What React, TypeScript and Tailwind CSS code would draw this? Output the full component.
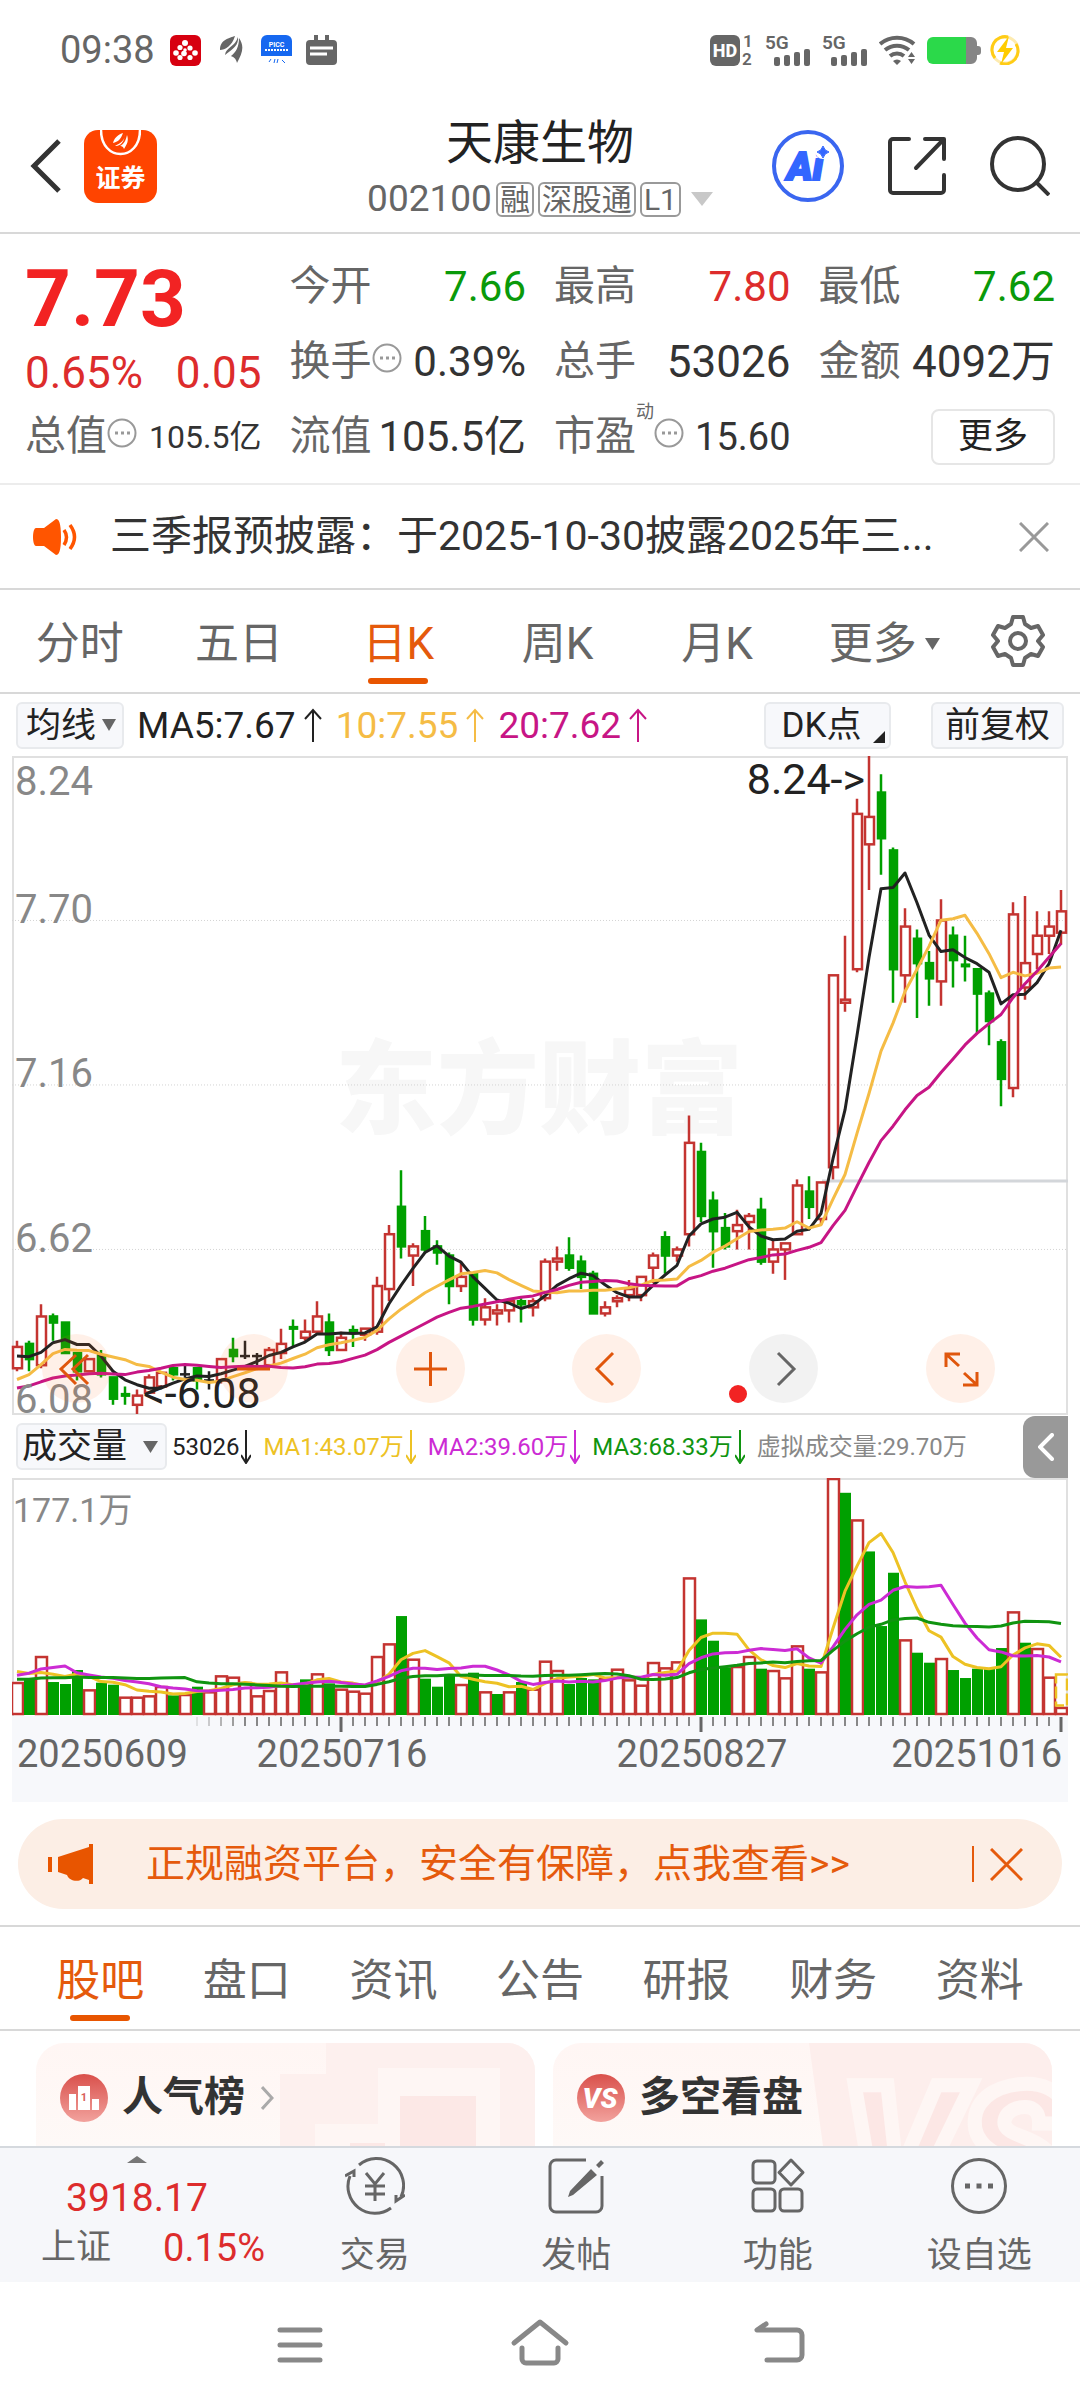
import React from 'react';

const RED = '#c43431';
const GREEN = '#00a000';
const STEP = 12;

// [open, close, high, low, volume]
const candles = [
  [6.23, 6.3, 6.32, 6.22, 24], [6.31, 6.26, 6.32, 6.22, 27], [6.24, 6.4, 6.44, 6.23, 43.5], [6.4, 6.38, 6.41, 6.32, 24],
  [6.38, 6.28, 6.38, 6.28, 22.5], [6.28, 6.22, 6.28, 6.19, 33], [6.22, 6.26, 6.26, 6.22, 18.5], [6.27, 6.21, 6.29, 6.2, 23.5],
  [6.2, 6.13, 6.2, 6.11, 22], [6.145, 6.14, 6.17, 6.11, 13], [6.11, 6.14, 6.16, 6.08, 13], [6.15, 6.2, 6.21, 6.15, 14],
  [6.17, 6.215, 6.22, 6.17, 21], [6.23, 6.21, 6.23, 6.19, 14], [6.21, 6.21, 6.24, 6.2, 15], [6.23, 6.19, 6.23, 6.16, 20.5],
  [6.19, 6.19, 6.22, 6.16, 17], [6.19, 6.26, 6.26, 6.18, 29], [6.29, 6.27, 6.33, 6.25, 28], [6.27, 6.27, 6.32, 6.26, 24],
  [6.27, 6.27, 6.28, 6.24, 14], [6.24, 6.29, 6.3, 6.23, 18], [6.28, 6.31, 6.36, 6.26, 32], [6.365, 6.36, 6.39, 6.3, 22],
  [6.33, 6.35, 6.39, 6.32, 26], [6.35, 6.4, 6.45, 6.34, 30.5], [6.38, 6.29, 6.41, 6.27, 23], [6.29, 6.33, 6.35, 6.29, 19],
  [6.355, 6.35, 6.37, 6.3, 17.5], [6.34, 6.36, 6.36, 6.32, 16], [6.35, 6.5, 6.53, 6.34, 43.5], [6.49, 6.67, 6.7, 6.45, 53],
  [6.76, 6.63, 6.88, 6.59, 73.5], [6.6, 6.63, 6.64, 6.5, 41.5], [6.68, 6.62, 6.73, 6.61, 26.5], [6.63, 6.61, 6.65, 6.57, 20.5],
  [6.6, 6.5, 6.61, 6.44, 30], [6.5, 6.53, 6.58, 6.48, 22.5], [6.54, 6.39, 6.54, 6.37, 31], [6.39, 6.43, 6.46, 6.37, 17],
  [6.41, 6.42, 6.44, 6.37, 15], [6.42, 6.45, 6.46, 6.38, 17], [6.45, 6.44, 6.46, 6.38, 24], [6.43, 6.45, 6.46, 6.4, 19],
  [6.46, 6.58, 6.59, 6.45, 40], [6.58, 6.59, 6.63, 6.55, 33], [6.6, 6.56, 6.66, 6.55, 22.5], [6.58, 6.53, 6.6, 6.49, 27],
  [6.54, 6.41, 6.55, 6.41, 26], [6.41, 6.43, 6.45, 6.4, 27], [6.45, 6.46, 6.47, 6.43, 34], [6.47, 6.49, 6.52, 6.45, 26],
  [6.47, 6.53, 6.53, 6.45, 22], [6.56, 6.6, 6.61, 6.51, 39], [6.66, 6.6, 6.68, 6.54, 35], [6.6, 6.62, 6.63, 6.58, 39.5],
  [6.67, 6.97, 7.06, 6.63, 102.5], [6.94, 6.73, 6.97, 6.71, 71], [6.78, 6.68, 6.81, 6.56, 55], [6.69, 6.63, 6.74, 6.62, 35],
  [6.68, 6.7, 6.75, 6.62, 36], [6.71, 6.73, 6.74, 6.62, 43.5], [6.75, 6.58, 6.79, 6.57, 34], [6.58, 6.62, 6.65, 6.54, 33],
  [6.62, 6.64, 6.64, 6.52, 27.5], [6.67, 6.83, 6.85, 6.67, 51.5], [6.81, 6.76, 6.86, 6.72, 34], [6.72, 6.84, 6.84, 6.7, 32],
  [6.89, 7.52, 7.52, 6.85, 177.1], [7.43, 7.44, 7.65, 7.4, 166], [7.54, 8.05, 8.1, 7.53, 146], [7.95, 8.04, 8.24, 7.8, 122],
  [8.12, 7.97, 8.18, 7.85, 66], [7.93, 7.54, 7.94, 7.43, 106], [7.52, 7.68, 7.74, 7.43, 56], [7.64, 7.56, 7.67, 7.38, 46],
  [7.56, 7.51, 7.6, 7.42, 38.5], [7.5, 7.7, 7.77, 7.42, 42], [7.65, 7.57, 7.68, 7.48, 33], [7.555, 7.55, 7.65, 7.5, 27],
  [7.54, 7.46, 7.54, 7.33, 34], [7.46, 7.37, 7.47, 7.29, 34], [7.3, 7.18, 7.31, 7.09, 49.5], [7.15, 7.72, 7.76, 7.12, 77],
  [7.48, 7.56, 7.78, 7.44, 53.5], [7.59, 7.65, 7.73, 7.54, 49.5], [7.65, 7.68, 7.73, 7.59, 28], [7.66, 7.73, 7.8, 7.62, 5.3],
];

// days before the first visible bar, needed for the averages
const priorCloses = [6.12, 6.13, 6.13, 6.14, 6.17, 6.17, 6.18, 6.18, 6.18, 5.97, 6.1, 6.07, 6.02, 6.14, 6.25, 6.27, 6.33, 6.22, 6.23];
const priorVolumes = [25, 24, 23, 22, 22, 24, 23, 22, 23, 22, 12, 12, 12, 12, 84, 34, 40, 30, 31];

const closes = candles.map((c) => c[1]);
const volumes = candles.map((c) => c[4]);

const average = (prior: number[], values: number[], n: number) => {
  const all = [...prior, ...values];
  return values.map((_, i) => {
    const end = prior.length + i + 1;
    return all.slice(end - n, end).reduce((a, b) => a + b, 0) / n;
  });
};

const barX = (i: number) => 5 + i * STEP;
const priceY = (p: number) => (8.24 - p) * 304.6;
const volumeY = (v: number) => 236 - (v / 177.1) * 236;
const line = (values: number[], y: (v: number) => number) =>
  values.map((v, i) => `${barX(i)},${y(v).toFixed(1)}`).join(' ');

const StatusBar = () => (
  <div className="flex items-center justify-between pl-[60px] pr-[60px] h-[100px] text-[#666]">
    <div className="flex items-center">
      <span className="text-[38px] leading-none">09:38</span>
      <svg className="ml-[15px] w-[31px] h-[31px]" viewBox="0 0 31 31">
        <rect width="31" height="31" rx="6" fill="#d70010" />
        <g fill="#fff">
          <circle cx="15" cy="8" r="3" /><circle cx="10" cy="12.500" r="2.600" /><circle cx="20" cy="13" r="2.600" />
          <circle cx="15" cy="15" r="1.800" /><circle cx="6" cy="18" r="2.800" /><circle cx="14" cy="18.500" r="2.800" />
          <circle cx="25" cy="18" r="2.800" /><circle cx="10" cy="22.500" r="2.600" /><circle cx="20" cy="22.500" r="2.600" />
        </g>
      </svg>
      <svg className="ml-[19px] w-[23px] h-[28px]" viewBox="0 0 23 28" fill="#666">
        <path d="M15 0C10 2 0 3 0 14c5 0 12-4 15-14z" />
        <path d="M18 1c1 8-5 12-13 18 1-8 10-8 13-18z" />
        <path d="M19 2c6 9 3 15-2 25-1-5-4-6-6-7 5-4 8-9 8-18z" />
      </svg>
      <svg className="ml-[18px] w-[31px] h-[31px]" viewBox="0 0 31 31">
        <path d="M0 21V6a6 6 0 016-6h19a6 6 0 016 6v15z" fill="#1668f0" />
        <text x="15.500" y="12" fontSize="7" fontWeight="700" fill="#fff" textAnchor="middle">PICC</text>
        <path d="M4 15h23" stroke="#fff" strokeWidth="2" strokeDasharray="2 1" />
        <path d="M8 27l2-3M14 24l-1 4M17 24l-1 4M21 25l3 3" stroke="#1668f0" strokeWidth="1" />
      </svg>
      <svg className="ml-[14px] w-[31px] h-[31px]" viewBox="0 0 31 31">
        <path d="M4 5h4V0h4v5h7V0h4v5h4a4 4 0 014 4v17a4 4 0 01-4 4H4a4 4 0 01-4-4V9a4 4 0 014-4z" fill="#666" />
        <path d="M4 13h23M4 19h17" stroke="#fff" strokeWidth="3" />
      </svg>
    </div>
    <div className="flex items-center">
      <svg className="w-[43px] h-[31px] overflow-visible" viewBox="0 0 43 31" fill="#666">
        <rect width="30" height="31" rx="6" />
        <text x="15" y="22" fontSize="18" fontWeight="800" fill="#fff" textAnchor="middle">HD</text>
        <text x="33" y="12" fontSize="17" fontWeight="600">1</text>
        <text x="32" y="30" fontSize="17" fontWeight="600">2</text>
      </svg>
      {[0, 1].map((n) => (
        <svg key={n} className="ml-3 w-[45px] h-[31px] overflow-visible" viewBox="0 0 45 31" fill="#666">
          <text x="0" y="14" fontSize="19" fontWeight="600">5G</text>
          <rect x="9" y="22" width="6" height="9" rx="2" />
          <rect x="19" y="20" width="6" height="11" rx="2" />
          <rect x="29" y="17" width="6" height="14" rx="2" />
          <rect x="39" y="14" width="6" height="17" rx="2" />
        </svg>
      ))}
      <svg className="ml-3 w-[37px] h-[30px]" viewBox="0 0 37 30" fill="none" stroke="#666" strokeWidth="4">
        <path d="M1 9a26 26 0 0134 0M6 15a19 19 0 0124 0M11 21a11 11 0 0114 0" />
        <path d="M14 26a6 6 0 018 0l-4 4zM29 22l3.500-5 3.500 5zM29 24h7l-3.500 5z" fill="#666" stroke="none" />
      </svg>
      <svg className="ml-[11px] w-[54px] h-[27px]" viewBox="0 0 54 27">
        <path d="M38 0h6a6 6 0 016 6v3h1a3 3 0 013 3v3a3 3 0 01-3 3h-1v3a6 6 0 01-6 6h-6z" fill="#858585" />
        <path d="M6 0h33v27H6a6 6 0 01-6-6V6a6 6 0 016-6z" fill="#2bd94a" />
      </svg>
      <svg className="ml-[9px] w-[30px] h-[30px]" viewBox="0 0 30 30">
        <circle cx="15" cy="15" r="13" fill="none" stroke="#fdebb0" strokeWidth="3" />
        <path d="M18 2A13 13 0 005 23M10 28A13 13 0 0026 9" fill="none" stroke="#ffcc16" strokeWidth="3" />
        <path d="M19 1L7 17h7l-3 12 12-16h-7z" fill="#fc0" />
      </svg>
    </div>
  </div>
);

const Tag: React.FC<{ children: React.ReactNode }> = ({ children }) => (
  <span className="ml-1 px-[2px] border-2 border-[#999] rounded-md text-[30px] leading-[31px]">{children}</span>
);

const Header = () => (
  <header className="grid grid-cols-[1fr_auto_1fr] items-center h-[134px] px-[30px] border-b-2 border-[#d8d8d8]">
    <div className="flex items-center gap-[22px]">
      <button aria-label="返回">
        <svg className="w-8 h-[54px]" viewBox="0 0 32 54" fill="none" stroke="#333" strokeWidth="5">
          <path d="M29 2L4 27l25 25" />
        </svg>
      </button>
      <a href="#" className="relative w-[73px] h-[73px] rounded-[14px] bg-[#ff4400] flex items-end justify-center overflow-hidden">
        <svg className="absolute top-0 left-4 w-[41px] h-[26px]" viewBox="0 0 41 26">
          <path d="M1 0c0 32 39 32 39 0" fill="none" stroke="#fff" strokeWidth="2.500" />
          <path d="M23 3c-6 2-9 6-10 10 5-1 8-4 10-10zM25 4c0 6-4 9-10 12 2 0 9 0 10-12zM27 5c2 6 0 9-3 14-1-3-3-3-4-3 4-2 6-6 7-11z" fill="#fff" />
        </svg>
        <span className="pb-2 font-bold text-white text-[25px] leading-8">证券</span>
      </a>
    </div>
    <div className="flex flex-col items-center pt-[6px]">
      <h1 className="text-[47px] leading-[60px] text-[#222]">天康生物</h1>
      <div className="flex items-center text-[#666] text-[37px] leading-[52px]">
        002100
        <Tag>融</Tag>
        <Tag>深股通</Tag>
        <Tag>L1</Tag>
        <svg className="ml-[10px] w-[22px] h-[14px]" viewBox="0 0 22 14" fill="#c8c8c8"><path d="M0 0h22L11 14z" /></svg>
      </div>
    </div>
    <div className="flex items-center justify-end gap-[44px]">
      <button aria-label="智能助手">
        <svg className="w-[72px] h-[72px]" viewBox="0 0 72 72">
          <circle cx="36" cy="36" r="34" fill="none" stroke="#3a66f0" strokeWidth="4" />
          <text x="33" y="50" fontSize="39" fontWeight="900" fontStyle="italic" fill="#3366ff" stroke="#3366ff" strokeWidth="2" textAnchor="middle">Ai</text>
          <circle cx="51" cy="21" r="8" fill="#fff" />
          <path d="M51 16q1.500 5 6 6-4.500 1-6 6-1.500-5-6-6 4.500-1 6-6z" fill="#3366ff" stroke="#3366ff" />
        </svg>
      </button>
      <button aria-label="分享">
        <svg className="w-[58px] h-[58px]" viewBox="0 0 58 58" fill="none" stroke="#333" strokeWidth="4" strokeLinecap="round" strokeLinejoin="round">
          <path d="M21 2H5a3 3 0 00-3 3v48a3 3 0 003 3h48a3 3 0 003-3V38M37 2h19v20M55 3L28 31" />
        </svg>
      </button>
      <button aria-label="搜索">
        <svg className="w-[60px] h-[60px]" viewBox="0 0 60 60" fill="none" stroke="#333" strokeWidth="4">
          <circle cx="28" cy="28" r="26" /><path d="M45 45l14 14" />
        </svg>
      </button>
    </div>
  </header>
);

const Dots = () => (
  <svg className="shrink-0 w-[30px] h-[30px] mb-2" viewBox="0 0 30 30">
    <circle cx="15" cy="15" r="13.500" fill="none" stroke="#999" strokeWidth="2" />
    <path d="M8 15h3M14 15h3M20 15h3" stroke="#999" strokeWidth="3" />
  </svg>
);

type QuoteProps = { label: string; value: string; color?: string; size?: string; info?: boolean; sup?: string };

const Quote: React.FC<QuoteProps> = ({ label, value, color = 'text-[#333]', size = 'text-[42px]', info, sup }) => (
  <div className="flex items-center justify-between whitespace-nowrap">
    <dt className="flex items-center text-[41px] text-[#666]">
      {label}
      {sup && <sup className="self-start -mt-1 text-[18px] leading-none">{sup}</sup>}
      {info && <Dots />}
    </dt>
    <dd className={`${size} ${color}`}>{value}</dd>
  </div>
);

const Quotes = () => (
  <section className="px-[25px] pt-[15px] pb-[9px] border-b-2 border-[#ececec]">
    <dl className="grid grid-cols-4 gap-x-7 auto-rows-[75px] leading-none">
      <div className="row-span-2 flex flex-col justify-between pt-[12px] pb-[2px]">
        <strong className="text-[80px] leading-[76px] font-bold text-[#f22323]">7.73</strong>
        <div className="flex justify-between text-[44px] leading-[48px] text-[#dd2c2c]">
          <span>0.65%</span>
          <span>0.05</span>
        </div>
      </div>
      <Quote label="今开" value="7.66" color="text-[#0a9a0a]" />
      <Quote label="最高" value="7.80" color="text-[#dd2c2c]" />
      <Quote label="最低" value="7.62" color="text-[#0a9a0a]" />
      <Quote label="换手" value="0.39%" info />
      <Quote label="总手" value="53026" size="text-[44px]" />
      <Quote label="金额" value="4092万" size="text-[44px]" />
      <Quote label="总值" value="105.5亿" size="text-[32px]" info />
      <Quote label="流值" value="105.5亿" />
      <Quote label="市盈" value="15.60" size="text-[38px]" info sup="动" />
      <button className="self-center justify-self-end w-[124px] h-[56px] border-2 border-[#e6e6e6] rounded-lg text-[35px] text-[#222]">更多</button>
    </dl>
  </section>
);

const Notice = () => (
  <section className="flex items-center h-[105px] pl-[33px] pr-[31px] border-b-2 border-[#d8d8d8]">
    <svg className="w-[45px] h-[36px]" viewBox="0 0 45 36">
      <path d="M3 9h8L23 0c3 0 5 4 5 18s-2 18-5 18l-12-9H3c-4 0-4-18 0-18z" fill="#ff5500" />
      <path d="M31 11q5 7 0 15M37 6q9 12 0 24" fill="none" stroke="#ff5500" strokeWidth="3.500" />
    </svg>
    <a href="#" className="ml-8 flex-1 text-[41px] text-[#333] whitespace-nowrap">三季报预披露：于2025-10-30披露2025年三...</a>
    <button aria-label="关闭">
      <svg className="w-[30px] h-[30px]" viewBox="0 0 30 30" stroke="#999" strokeWidth="3"><path d="M1 1l28 28M29 1L1 29" /></svg>
    </button>
  </section>
);

const Tabs: React.FC<{ items: string[]; active: string; className?: string; children?: React.ReactNode }> = ({ items, active, className = '', children }) => (
  <nav className={`flex items-stretch h-[104px] border-b-2 border-[#d8d8d8] text-[44px] text-[#666] ${className}`}>
    <div className="flex-1 grid grid-flow-col auto-cols-fr">
      {items.map((item) => (
        <button
          key={item}
          className={`relative flex items-center justify-center pt-[6px] whitespace-nowrap ${item === active ? 'text-[#e55a0c]' : ''} ${item.endsWith('▼') ? 'pl-4' : ''}`}
        >
          {item.replace('▼', '')}
          {item.endsWith('▼') && (
            <svg className="ml-2 w-[15px] h-[12px]" viewBox="0 0 15 12" fill="#666"><path d="M0 0h15L7.500 12z" /></svg>
          )}
          {item === active && <span className="absolute bottom-2 w-[60px] h-[6px] rounded-full bg-[#e85500]" />}
        </button>
      ))}
    </div>
    {children}
  </nav>
);

const Arrow: React.FC<{ down?: boolean; small?: boolean }> = ({ down, small }) => (
  <svg className={small ? 'ml-[2px] w-[10px] h-[34px]' : 'ml-2 w-[18px] h-[34px]'} viewBox={small ? '0 0 10 34' : '0 0 18 34'} fill="none" stroke="currentColor" strokeWidth="2">
    {small ? <path d={down ? 'M5 0v32M0 25l5 8 5-8' : 'M5 34V2M0 9l5-8 5 8'} /> : <path d="M9 34V2M1 11l8-9 8 9" />}
  </svg>
);

const pill = 'h-[47px] rounded-md border-2 border-[#e8eaed] bg-[#f7f8fb] text-[#222] text-[35px] leading-none whitespace-nowrap';

const MaRow = () => (
  <div className="flex items-center h-[62px] pl-4 pr-4 text-[37px] leading-none whitespace-nowrap">
    <label className="relative flex items-center">
      <select aria-label="主图指标" className={`appearance-none pl-2 w-[108px] ${pill}`}>
        <option>均线</option>
      </select>
      <svg className="absolute right-2 w-[14px] h-[12px]" viewBox="0 0 14 12" fill="#666"><path d="M0 0h14L7 12z" /></svg>
    </label>
    <span className="flex items-center ml-[13px] text-[#222]">MA5:7.67<Arrow /></span>
    <span className="flex items-center ml-[14px] text-[#f5bc45]">10:7.55<Arrow /></span>
    <span className="flex items-center ml-[14px] text-[#c71585]">20:7.62<Arrow /></span>
    <button className={`relative ml-auto w-[127px] pr-3 ${pill}`}>
      DK点
      <svg className="absolute right-1 bottom-1 w-[12px] h-[12px]" viewBox="0 0 12 12" fill="#222"><path d="M12 0v12H0z" /></svg>
    </button>
    <button className={`ml-10 w-[133px] ${pill}`}>前复权</button>
  </div>
);

const controls = [
  { name: '最早', bg: 'bg-[#ff6a1a]/10', color: '#e0560c', d: 'M34 21L19 35l15 15M46 21L31 35l15 15' },
  { name: '缩小', bg: 'bg-[#ff6a1a]/10', color: '#e0560c', d: 'M18 35h33' },
  { name: '放大', bg: 'bg-[#ff6a1a]/10', color: '#e0560c', d: 'M18 35h33M34.500 18v34' },
  { name: '向左', bg: 'bg-[#ff6a1a]/10', color: '#e0560c', d: 'M41 19L25 35l16 16' },
  { name: '向右', bg: 'bg-black/5', color: '#666', d: 'M29 19l16 16-16 16' },
  { name: '全屏', bg: 'bg-[#ff6a1a]/10', color: '#e0560c', d: 'M20 33V20h14M21 21l12 11M51 38v13H37M50 50L38 39' },
];

const PriceChart = () => (
  <div className="relative mx-3">
    <svg className="block w-full overflow-visible" viewBox="0 0 1056 659">
      <text x="323" y="370" fontSize="102" fontWeight="900" fill="#f7f7f7">东方财富</text>
      <rect x="1" y="1" width="1054" height="657" fill="none" stroke="#e0e0e0" strokeWidth="2" />
      {[7.7, 7.16, 6.62].map((p) => (
        <line key={p} x1="0" x2="1056" y1={priceY(p)} y2={priceY(p)} stroke="#d4d4d4" strokeDasharray="1 2" />
      ))}
      <line x1="810" x2="1056" y1="425" y2="425" stroke="#d3d6da" strokeWidth="3" />
      {candles.map(([open, close, high, low], i) => {
        const color = close > open ? RED : close < open ? GREEN : '#222';
        const top = priceY(Math.max(open, close));
        const bottom = priceY(Math.min(open, close));
        return (
          <g key={i} stroke={color} strokeWidth="2.500">
            <path d={`M${barX(i)} ${priceY(high)}V${top}M${barX(i)} ${bottom}V${priceY(low)}`} />
            {close > open && <rect x={barX(i) - 4} y={top} width="9" height={bottom - top} fill="none" />}
            {close < open && <rect x={barX(i) - 3} y={top} width="7" height={bottom - top} fill={color} />}
            {close === open && <path d={`M${barX(i) - 5} ${top}h10`} />}
          </g>
        );
      })}
      <g fill="none" strokeWidth="3" strokeLinejoin="round">
        <polyline points={line(average(priorCloses, closes, 5), priceY)} stroke="#222" />
        <polyline points={line(average(priorCloses, closes, 10), priceY)} stroke="#f5bc45" />
        <polyline points={line(average(priorCloses, closes, 20), priceY)} stroke="#c71585" />
      </g>
      <g fill="#888" fontSize="40">
        <text x="3" y="39">8.24</text>
        <text x="3" y="167">7.70</text>
        <text x="3" y="331">7.16</text>
        <text x="3" y="496">6.62</text>
        <text x="3" y="657">6.08</text>
      </g>
      <g fill="#222" fontSize="43">
        <text x="853" y="38" textAnchor="end">8.24-&gt;</text>
        <text x="131" y="652">&lt;-6.08</text>
      </g>
      <circle cx="726" cy="638" r="9" fill="#f22323" />
    </svg>
    <div className="absolute left-[30px] right-[73px] bottom-3 flex justify-between">
      {controls.map((c) => (
        <button key={c.name} aria-label={c.name} className={`w-[69px] h-[69px] rounded-full ${c.bg}`}>
          <svg viewBox="0 0 69 69" fill="none" stroke={c.color} strokeWidth="3"><path d={c.d} /></svg>
        </button>
      ))}
    </div>
  </div>
);

const VolumeRow = () => (
  <div className="flex items-center h-[63px] pl-4 pr-3 text-[24px] leading-none whitespace-nowrap">
    <label className="relative flex items-center">
      <select aria-label="副图指标" className={`appearance-none pl-1 w-[151px] ${pill}`}>
        <option>成交量</option>
      </select>
      <svg className="absolute right-[9px] w-[15px] h-[12px]" viewBox="0 0 15 12" fill="#666"><path d="M0 0h15L7.500 12z" /></svg>
    </label>
    <span className="flex items-center ml-[5px] text-[#222]">53026<Arrow down small /></span>
    <span className="flex items-center ml-3 text-[#edc224]">MA1:43.07万<Arrow down small /></span>
    <span className="flex items-center ml-3 text-[#cc2bd4]">MA2:39.60万<Arrow down small /></span>
    <span className="flex items-center ml-3 text-[#109410]">MA3:68.33万<Arrow down small /></span>
    <span className="ml-3 text-[#888]">虚拟成交量:29.70万</span>
    <button aria-label="展开" className="ml-auto w-[45px] h-[62px] rounded-l-xl bg-[#999] flex items-center justify-center">
      <svg className="w-4 h-[28px]" viewBox="0 0 16 28" fill="none" stroke="#fff" strokeWidth="4" strokeLinecap="round"><path d="M14 2L2 14l12 12" /></svg>
    </button>
  </div>
);

const VolumeChart = () => (
  <div className="mx-3">
    <svg className="block w-full" viewBox="0 0 1056 324">
      <rect x="1" y="1" width="1054" height="240" fill="none" stroke="#e0e0e0" strokeWidth="2" />
      <rect y="238" width="1056" height="86" fill="#f7f8fb" />
      {candles.map(([open, close, , , volume], i) => {
        const up = close >= (i ? closes[i - 1] : open);
        const y = volumeY(volume);
        return up
          ? <rect key={i} x={barX(i) - 5} y={y + 1} width="11" height={235 - y} fill="#fff" stroke={RED} strokeWidth="2.500" />
          : <rect key={i} x={barX(i) - 5} y={y} width="11" height={237 - y} fill={GREEN} />;
      })}
      <rect x={barX(87) - 5} y={volumeY(29.7)} width="11" height="31" fill="none" stroke="#edc224" strokeWidth="2.500" strokeDasharray="12 3" />
      <g fill="none" strokeWidth="3" strokeLinejoin="round">
        <polyline points={line(average(priorVolumes, volumes, 5), volumeY)} stroke="#edc224" />
        <polyline points={line(average(priorVolumes, volumes, 10), volumeY)} stroke="#cc2bd4" />
        <polyline points={line(average(priorVolumes, volumes, 20), volumeY)} stroke="#109410" />
      </g>
      {candles.map((_, i) => {
        if (i < 15) return null;
        const major = i % 30 === 27;
        return (
          <line key={i} x1={barX(i)} x2={barX(i)} y1="239" y2={major ? 254 : 248} stroke={major ? '#666' : '#888'}
            strokeWidth={major ? 3 : 2} opacity={Math.min(1, (i - 14) / 5)} />
        );
      })}
      <text x="1" y="44" fontSize="34" fill="#888">177.1万</text>
      <g fill="#666" fontSize="38">
        <text x="5" y="289">20250609</text>
        <text x="330" y="289" textAnchor="middle">20250716</text>
        <text x="690" y="289" textAnchor="middle">20250827</text>
        <text x="1050" y="289" textAnchor="end">20251016</text>
      </g>
    </svg>
  </div>
);

const Banner = () => (
  <div className="mx-[18px] mt-[17px] mb-4 flex items-center h-[90px] rounded-full bg-[#fceee5] pl-[30px] pr-[39px] text-[#e55a0c]">
    <svg className="w-[46px] h-[40px]" viewBox="0 0 46 40" fill="#e85500">
      <path d="M0 13h4v15H0zM10 13L41 3V0h4v40h-4v-4l-6-2c-4 5-14 3-16-3l-9-3z" />
    </svg>
    <a href="#" className="ml-[52px] flex-1 text-[39px] whitespace-nowrap">正规融资平台，安全有保障，点我查看&gt;&gt;</a>
    <span className="w-[2px] h-[36px] bg-[#e55a0c]" />
    <button aria-label="关闭广告" className="ml-4">
      <svg className="w-[33px] h-[33px]" viewBox="0 0 33 33" stroke="#e55a0c" strokeWidth="3"><path d="M1 1l31 31M32 1L1 32" /></svg>
    </button>
  </div>
);

const card = 'relative h-[103px] rounded-t-[28px] overflow-hidden bg-gradient-to-b from-[#fff6f4] to-[#fef9f7] flex items-center pl-6 pt-[6px] text-[41px] font-bold text-[#333]';

const Cards = () => (
  <section className="grid grid-cols-2 gap-[18px] px-[28px] pl-9 pt-3">
    <a href="#" className={card}>
      <svg className="absolute right-0 top-0 w-[255px] h-[103px]" viewBox="0 0 255 103">
        <path d="M46 0h209v103H0V31h46z" fill="#fdf0ee" />
        <path d="M98 25h122v78H35V81h63z" fill="#fef6f4" />
        <path d="M120 53h76v50h-76zM70 100h35v3H70z" fill="#fce8e6" />
      </svg>
      <svg className="relative w-[48px] h-[48px]" viewBox="0 0 48 48">
        <defs>
          <linearGradient id="badge" x1="0" y1="0" x2="0" y2="1">
            <stop offset="0" stopColor="#d9504b" /><stop offset="1" stopColor="#f2a29d" />
          </linearGradient>
        </defs>
        <circle cx="24" cy="24" r="24" fill="url(#badge)" />
        <path d="M9 20h7v16H9zM18 12h12v24H18zM32 25h7v11h-7z" fill="#fff" />
        <text x="24" y="27" fontSize="11" fill="#d9605b" textAnchor="middle">1</text>
      </svg>
      <span className="relative ml-[14px]">人气榜</span>
      <svg className="relative ml-4 w-[13px] h-[24px]" viewBox="0 0 13 24" fill="none" stroke="#aaa" strokeWidth="3"><path d="M1 1l10 11L1 23" /></svg>
    </a>
    <a href="#" className={card}>
      <svg className="absolute right-0 top-0 w-[243px] h-[103px]" viewBox="0 0 243 103">
        <path d="M0 0h243v103H14z" fill="#fdeeec" />
        <text x="34" y="170" fontSize="180" fontWeight="900" fontStyle="italic" fill="#fce7e5" stroke="#fef6f4" strokeWidth="14">VS</text>
      </svg>
      <svg className="relative w-[48px] h-[48px]" viewBox="0 0 48 48">
        <circle cx="24" cy="24" r="24" fill="url(#badge)" />
        <text x="23" y="34" fontSize="28" fontWeight="900" fontStyle="italic" fill="#fff" textAnchor="middle">VS</text>
      </svg>
      <span className="relative ml-[14px]">多空看盘</span>
    </a>
  </section>
);

const actions = [
  {
    name: '交易',
    icon: <><path d="M14 9a27 27 0 0142 32M46 52A27 27 0 015 20" /><path d="M0 20l9-5v6M60 39l-9 6v-6" /><path d="M21 17l9 11 9-11M30 28v17M20 30h20M20 38h20" /></>,
  },
  {
    name: '发帖',
    icon: <><path d="M40 4H10a6 6 0 00-6 6v40a6 6 0 006 6h40a6 6 0 006-6V20" /><path d="M45 13l6 6-24 20-5 2 2-6zM50 9l5-5 3 3-5 5z" fill="#666" stroke="none" /></>,
  },
  {
    name: '功能',
    icon: <><rect x="5" y="5" width="22" height="22" rx="4" /><rect x="5" y="33" width="22" height="22" rx="4" /><rect x="32" y="33" width="22" height="22" rx="4" /><path d="M43 4l12 12.500L43 29 31 16.500z" strokeLinejoin="round" /></>,
  },
  {
    name: '设自选',
    icon: <><circle cx="30" cy="30" r="26.500" /><path d="M16 30h5M27.500 30h5M39 30h5" strokeWidth="5" /></>,
  },
];

const BottomBar = () => (
  <nav className="flex h-[136px] border-t-2 border-[#d5d9de] bg-[#f6f7fa] text-[35px] text-[#666]">
    <a href="#" className="w-[274px] flex flex-col items-center pt-2">
      <svg className="w-[20px] h-[7px]" viewBox="0 0 20 7" fill="#777"><path d="M0 7L10 0l10 7z" /></svg>
      <span className="mt-[7px] text-[39px] leading-[56px] text-[#dd2c2c]">3918.17</span>
      <span className="w-full flex items-center justify-between pl-[41px] pr-[9px] leading-[44px]">
        上证<span className="text-[38px] text-[#dd2c2c]">0.15%</span>
      </span>
    </a>
    {actions.map((a) => (
      <button key={a.name} className="flex-1 flex flex-col items-center pt-2">
        <svg className="w-[60px] h-[60px]" viewBox="0 0 60 60" fill="none" stroke="#666" strokeWidth="3">{a.icon}</svg>
        <span className="mt-[15px] leading-[50px]">{a.name}</span>
      </button>
    ))}
  </nav>
);

const SystemNav = () => (
  <div className="flex justify-center gap-[180px] h-[126px] items-center">
    {[
      { name: '最近任务', d: 'M10 15h40M10 30h40M10 45h40' },
      { name: '主屏幕', d: 'M4 28L30 7l26 21M12 33v11a4 4 0 004 4h28a4 4 0 004-4V33' },
      { name: '后退', d: 'M16 9l-9 6h40a5 5 0 015 5v20a5 5 0 01-5 5H17' },
    ].map((b) => (
      <button key={b.name} aria-label={b.name}>
        <svg className="w-[60px] h-[60px]" viewBox="0 0 60 60" fill="none" stroke="#888" strokeWidth="5" strokeLinecap="round" strokeLinejoin="round"><path d={b.d} /></svg>
      </button>
    ))}
  </div>
);

export default function App() {
  return (
    <main className="w-full bg-white font-['Roboto','Noto_Sans_CJK_SC',sans-serif]">
      <StatusBar />
      <Header />
      <Quotes />
      <Notice />
      <Tabs items={['分时', '五日', '日K', '周K', '月K', '更多▼']} active="日K">
        <button aria-label="设置" className="w-[124px] flex items-center justify-center">
          <svg className="w-[54px] h-[54px]" viewBox="0 0 54 54" fill="none" stroke="#666" strokeWidth="4" strokeLinejoin="round">
            <path d="M22 3h10l2 7 6 4 7-2 5 9-5 6 5 6-5 9-7-2-6 4-2 7H22l-2-7-6-4-7 2-5-9 5-6-5-6 5-9 7 2 6-4z" />
            <circle cx="27" cy="27" r="8" />
          </svg>
        </button>
      </Tabs>
      <MaRow />
      <PriceChart />
      <VolumeRow />
      <VolumeChart />
      <Banner />
      <div className="border-t-2 border-[#d8d8d8]" />
      <Tabs items={['股吧', '盘口', '资讯', '公告', '研报', '财务', '资料']} active="股吧" className="px-[27px]" />
      <Cards />
      <BottomBar />
      <SystemNav />
    </main>
  );
}
